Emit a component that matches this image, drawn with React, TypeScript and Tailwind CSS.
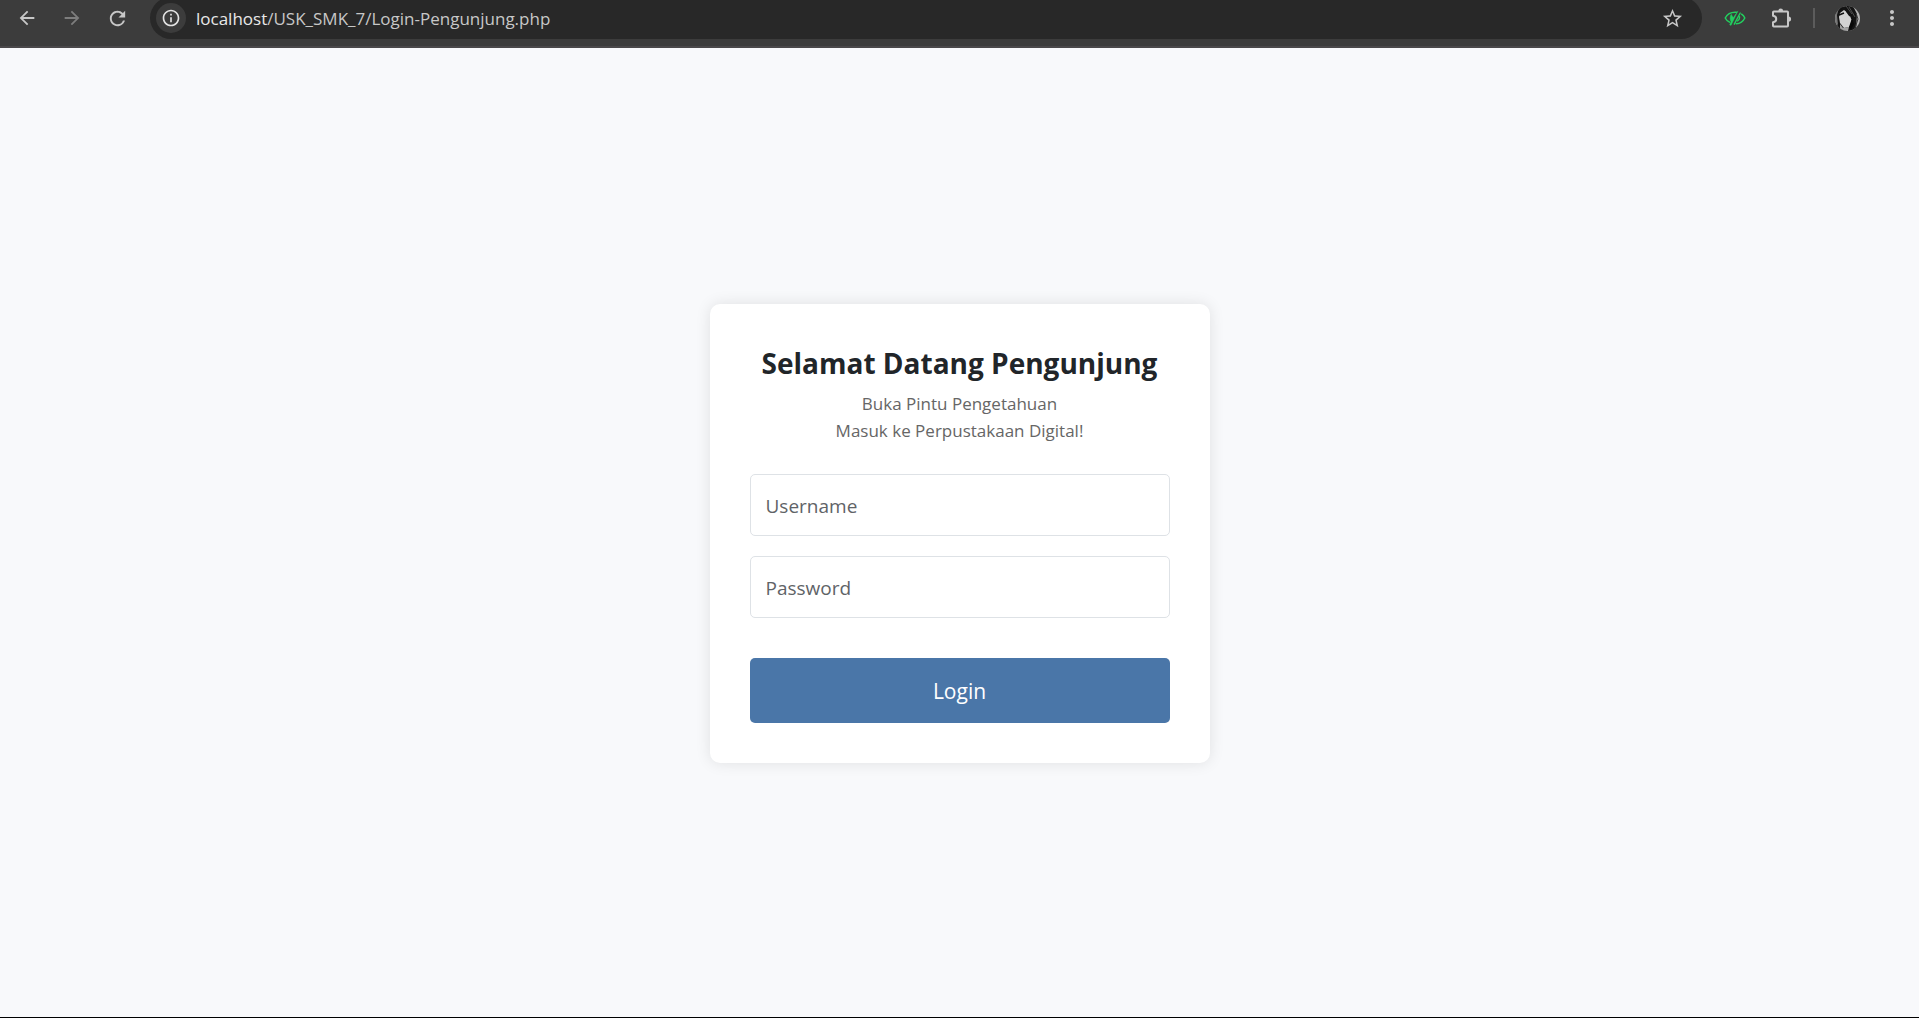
import { MdArrowBack, MdArrowForward, MdInfoOutline, MdMoreVert, MdRefresh, MdStarOutline } from 'react-icons/md';

function HiddenEyeIcon() {
  return (
    <svg width="22" height="18" viewBox="0 0 22 18" fill="none" stroke="#22d05f" strokeWidth="1.5" strokeLinecap="round" strokeLinejoin="round">
      <path d="M5.500 13.200C3.600 12.200 2.100 10.800 1.200 9C3.200 5.200 6.500 3.200 11 3.200H12.500" />
      <path d="M17.600 5.200C19 6.200 20.100 7.500 20.800 9C19 12.700 15.500 14.600 12.300 14.800" />
      <path d="M13.800 2.200L7 16.400L5.600 15.800L7 12.800C5.800 10.500 5.800 7.500 7.200 5.200L9.200 8.400Z" fill="#22d05f" strokeWidth="0.4" />
      <path d="M16.200 4L10.300 15.200" strokeWidth="1.400" />
      <path d="M15.600 7.500C15.800 9.300 15 11 13.500 12" strokeWidth="1.200" />
    </svg>
  );
}

function ExtensionIcon() {
  return (
    <svg width="22" height="22" viewBox="0 0 22 22">
      <path
        d="M3.800 4.500H16.200Q17 4.500 17 5.300V18.700Q17 19.500 16.200 19.500H2.800Q2 19.500 2 18.700V15.300C6.300 14.800 6.300 9.200 2 8.700V5.300Q2 4.500 2.800 4.500Z"
        fill="none"
        stroke="#c7c7c7"
        strokeWidth="2"
        strokeLinejoin="round"
      />
      <path d="M7.300 4A2.400 2.400 0 0 1 12.100 4ZM17.500 9.400A2.600 2.600 0 0 1 17.500 14.600Z" fill="#c7c7c7" />
    </svg>
  );
}

function Avatar() {
  return (
    <svg width="25" height="25" viewBox="0 0 25 25">
      <defs>
        <clipPath id="avatar-round">
          <circle cx="12.500" cy="12.500" r="12.500" />
        </clipPath>
      </defs>
      <g clipPath="url(#avatar-round)">
        <rect width="25" height="25" fill="#b5b5b5" />
        <path d="M2 0H18L22 8L21 25H3L1 12Z" fill="#141414" />
        <path d="M0 5L4 2L2 9L3 19L0 17Z" fill="#777777" />
        <path d="M5 7L9 4L14 8L17 12L16 18L14 21L9 22L5 17L4 11Z" fill="#d2d2d2" />
        <path d="M4 9L9 7M7 1L5 6M11 1L12 6L15 10M13 3L17 13" stroke="#111111" strokeWidth="1.500" fill="none" />
        <path d="M14 1L20 11M11 0L17 8" stroke="#777777" strokeWidth="0.600" />
        <path d="M5 18L8 22L14 21L13 25H5Z" fill="#a3a3a3" />
        <path d="M17 12L19 18L16 24L14 21Z" fill="#080808" />
        <path d="M21 7L23 13L20 22" stroke="#3b3b3b" strokeWidth="1" fill="none" />
      </g>
    </svg>
  );
}

function BrowserBar() {
  return (
    <header className="flex h-12 shrink-0 items-start overflow-hidden border-b-2 border-[#4a484a] bg-[#3c3c3c] pr-[15px] pl-4 text-[#c7c7c7]">
      <nav aria-label="Navigation" className="flex h-9 items-center gap-[23px]">
        <button type="button" aria-label="Back"><MdArrowBack size={22} /></button>
        <button type="button" aria-label="Forward" className="text-[#7d7d7d]"><MdArrowForward size={22} /></button>
        <button type="button" aria-label="Reload"><MdRefresh size={23} /></button>
      </nav>
      <div className="-mt-[3px] ml-[21px] flex h-[42px] flex-1 items-center rounded-full bg-[#282828] pr-[18px] pl-1.5">
        <button type="button" aria-label="Site information" className="flex size-[30px] items-center justify-center rounded-full bg-[#3c3c3c] text-[#e3e3e3]">
          <MdInfoOutline size={20} />
        </button>
        <div className="ml-[10px] flex-1 pt-0.5 font-['Open_Sans',sans-serif] text-[17px] leading-6 text-[#c7c7c7]">
          <span className="text-[#e8e8e8]">localhost</span>/USK_SMK_7/Login-Pengunjung.php
        </div>
        <button type="button" aria-label="Bookmark"><MdStarOutline size={23} /></button>
      </div>
      <div className="flex h-9 items-center pl-[22px]">
        <button type="button" aria-label="Hidden content"><HiddenEyeIcon /></button>
        <button type="button" aria-label="Extensions" className="ml-[25px]"><ExtensionIcon /></button>
        <span className="ml-5 h-5 w-0.5 bg-[#5c5c5c]" />
        <button type="button" aria-label="Profile" className="ml-5"><Avatar /></button>
        <button type="button" aria-label="Menu" className="ml-5"><MdMoreVert size={24} /></button>
      </div>
    </header>
  );
}

const fieldClass =
  'block w-full rounded-[5px] border border-[#dee2e6] bg-white px-[15px] pt-4 pb-[14px] text-[19px] leading-[30px] text-[#212529] placeholder:text-[#5f6367] outline-none focus:border-[#4a76a8]';

export default function App() {
  return (
    <div className="flex min-h-screen flex-col border-b border-black bg-[#f8f9fb] font-['Open_Sans',sans-serif]">
      <BrowserBar />
      <main className="flex flex-1 items-center justify-center pt-0.5">
        <section className="w-full max-w-[500px] rounded-[10px] bg-white p-10 shadow-[0_0_15px_rgba(0,0,0,0.1)]">
          <h1 className="text-center text-[28px] leading-[38px] font-bold text-[#212529]">Selamat Datang Pengunjung</h1>
          <p className="mt-2 mb-[30px] text-center text-[17px] leading-[27px] text-[#666666]">
            Buka Pintu Pengetahuan
            <br />
            Masuk ke Perpustakaan Digital!
          </p>
          <form onSubmit={(e) => e.preventDefault()}>
            <input aria-label="Username" type="text" placeholder="Username" className={fieldClass} />
            <input aria-label="Password" type="password" placeholder="Password" className={fieldClass + ' mt-5'} />
            <button type="submit" className="mt-10 block h-[65px] w-full rounded-[5px] bg-[#4a76a8] pt-0.5 text-[21px] text-white">
              Login
            </button>
          </form>
        </section>
      </main>
    </div>
  );
}
